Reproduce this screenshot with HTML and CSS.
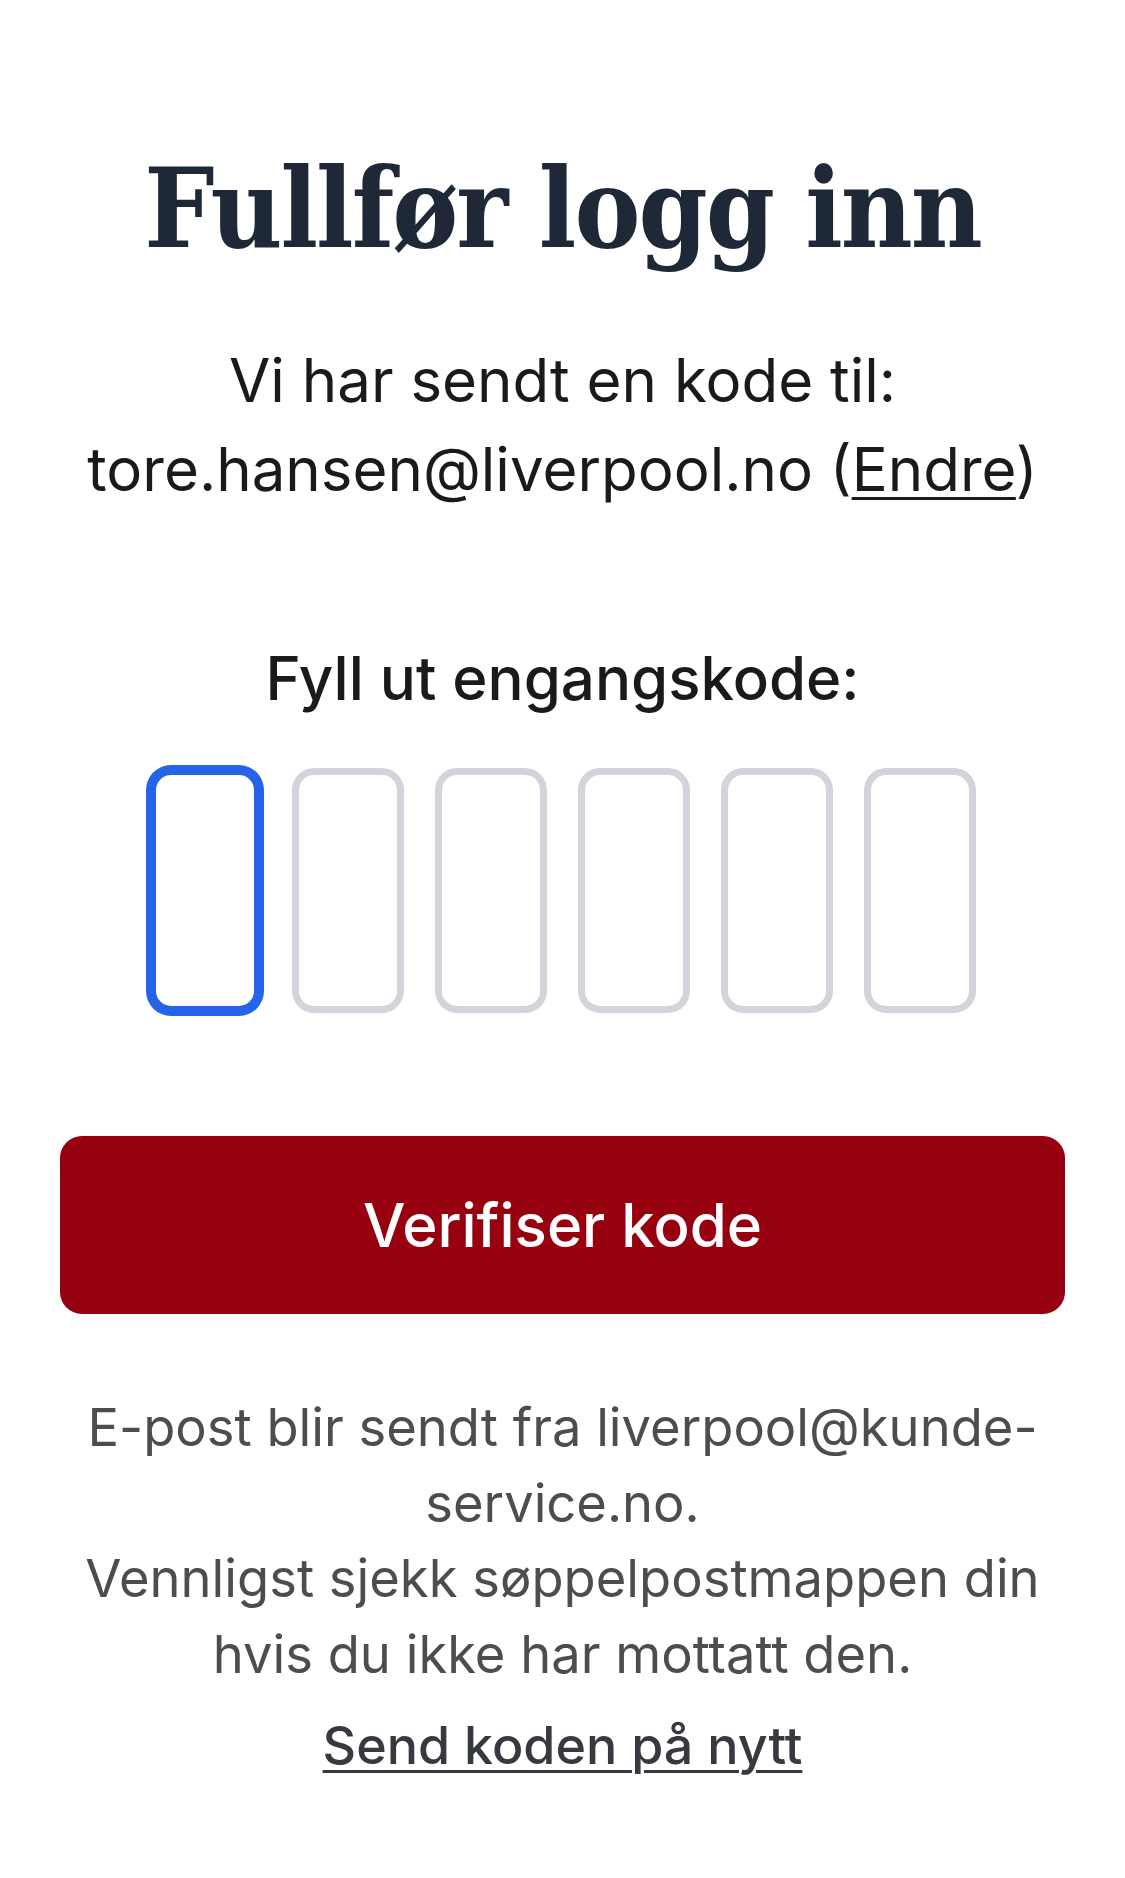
FILE: index.html
```html
<!DOCTYPE html>
<html lang="no">
<head>
<meta charset="utf-8">
<title>Fullfør logg inn</title>
<link rel="stylesheet" href="styles.css">
</head>
<body>
<main class="page">
  <h1 class="title">Fullfør logg inn</h1>
  <p class="sent">Vi har sendt en kode til:<br>tore.hansen@liverpool.no (<a class="change" href="#">Endre</a>)</p>
  <form class="otp-form">
    <label class="otp-label">Fyll ut engangskode:</label>
    <div class="otp-row">
      <input class="otp-box is-focused" type="text" maxlength="1" aria-label="Siffer 1">
      <input class="otp-box" type="text" maxlength="1" aria-label="Siffer 2">
      <input class="otp-box" type="text" maxlength="1" aria-label="Siffer 3">
      <input class="otp-box" type="text" maxlength="1" aria-label="Siffer 4">
      <input class="otp-box" type="text" maxlength="1" aria-label="Siffer 5">
      <input class="otp-box" type="text" maxlength="1" aria-label="Siffer 6">
    </div>
    <button class="verify" type="button">Verifiser kode</button>
  </form>
  <p class="info">E-post blir sendt fra liverpool@kunde-service.no.<br>Vennligst sjekk søppelpostmappen din hvis du ikke har mottatt den.</p>
  <a class="resend" href="#">Send koden på nytt</a>
</main>
</body>
</html>
```

FILE: styles.css
```css
html, body {
  margin: 0;
  padding: 0;
  background: #ffffff;
}

body {
  font-family: Inter, "Noto Sans", "Liberation Sans", sans-serif;
  color: #1a1a1a;
}

.page {
  width: 1125px;
  box-sizing: border-box;
  padding: 0 60px;
  display: flex;
  flex-direction: column;
  align-items: center;
  text-align: center;
}

.title {
  margin: 134px 0 0;
  font-family: "DejaVu Serif Condensed", "DejaVu Serif", "Liberation Serif", serif;
  font-weight: 700;
  font-size: 110px;
  line-height: 150px;
  color: #1e2836;
  letter-spacing: -2px;
}

.sent {
  margin: 52px 0 0;
  font-size: 60px;
  line-height: 88.6px;
}

.change {
  color: inherit;
  text-decoration: underline;
  text-decoration-thickness: 3px;
  text-underline-offset: 6px;
}

.otp-form {
  width: 100%;
  display: flex;
  flex-direction: column;
  align-items: center;
}

.otp-label {
  margin-top: 125px;
  font-size: 60px;
  line-height: 80px;
  font-weight: 500;
}

.otp-row {
  margin-top: 50px;
  display: flex;
  gap: 31px;
}

.otp-box {
  width: 112px;
  height: 245px;
  box-sizing: border-box;
  border: 7px solid #d1d5db;
  border-radius: 22px;
  background: #fff;
  padding: 0;
  margin: 0;
  outline: none;
  font: inherit;
}

.otp-box.is-focused {
  border-color: #2563eb;
  box-shadow: 0 0 0 3px #2563eb;
}

.verify {
  margin-top: 123px;
  width: 100%;
  height: 178px;
  border: 0;
  border-radius: 22px;
  background: #96000f;
  color: #ffffff;
  font-family: inherit;
  font-size: 60px;
  font-weight: 500;
}

.info {
  margin: 76px 0 0;
  font-size: 52.5px;
  line-height: 75.5px;
  color: #4d4d4d;
}

.resend {
  margin-top: 14px;
  font-size: 52px;
  line-height: 80px;
  font-weight: 500;
  color: #363a40;
  text-decoration: underline;
  text-decoration-thickness: 3px;
  text-underline-offset: 6px;
}
```
